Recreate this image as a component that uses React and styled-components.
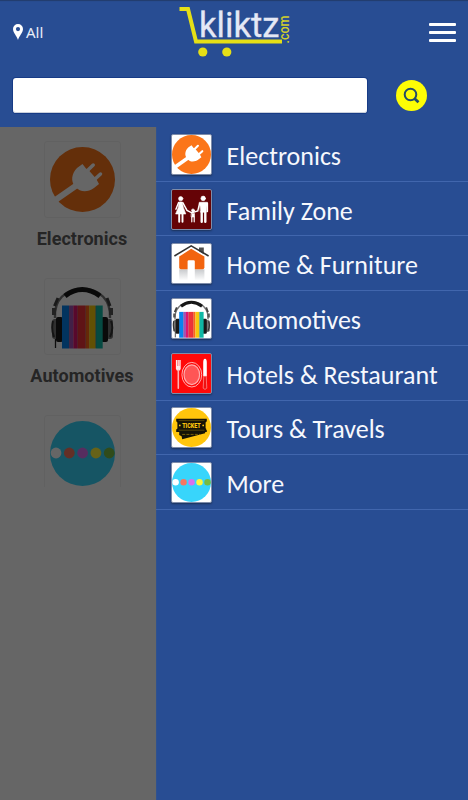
import React from "react";
import styled, { createGlobalStyle } from "styled-components";

const GlobalStyle = createGlobalStyle`
  * {
    box-sizing: border-box;
  }

  body {
    margin: 0;
    background-color: #ffffff;
    overflow: hidden;
  }
`;

const Container = styled.div`
  display: flex;
  flex-direction: column;
  width: 468px;
  height: 800px;
  overflow: hidden;
`;

const Header = styled.header`
  height: 127px;
  flex-shrink: 0;
  background-color: #284d93;
  box-shadow: inset 0 2px 1px -1px #223c6c;
`;

const TopBar = styled.div`
  display: flex;
  align-items: center;
  justify-content: space-between;
  height: 64px;
  padding: 0 12px 0 13px;
`;

const Location = styled.div`
  display: flex;
  align-items: center;
  gap: 3px;
  width: 157px;
  color: #e9eef8;
  font-family: "Noto Sans", sans-serif;
  font-size: 15px;
  line-height: 20px;
`;

const Logo = styled.svg`
  width: 130px;
  height: 64px;
  margin-right: auto;
`;

const MenuButton = styled.button`
  display: flex;
  flex-direction: column;
  justify-content: space-between;
  width: 27px;
  height: 19px;
  padding: 0;
  border: 0;
  background: none;
`;

const MenuLine = styled.span`
  width: 27px;
  height: 3px;
  border-radius: 1px;
  background-color: #ffffff;
`;

const SearchBar = styled.div`
  display: flex;
  align-items: center;
  gap: 29px;
  padding: 14px 13px 0;
`;

const SearchInput = styled.input`
  width: 354px;
  height: 35px;
  padding: 0 10px;
  border: 0;
  border-radius: 3px;
  outline: none;
  background-color: #ffffff;
  box-shadow: 0 0 0 1px #173b86, inset 0 -1px 0 #c9d0dc;
`;

const SearchButton = styled.button`
  display: flex;
  width: 31px;
  height: 31px;
  padding: 0;
  border: 0;
  border-radius: 50%;
  background-color: #fdfd05;
`;

const Body = styled.div`
  display: flex;
  flex: 1;
`;

const CategoryPane = styled.div`
  position: relative;
  width: 156px;
  padding: 14px 0 0 8px;
`;

const Scrim = styled.div`
  position: absolute;
  inset: 0;
  background-color: rgba(0, 0, 0, 0.6);
`;

const CategoryList = styled.div`
  height: 346px;
  overflow: hidden;
`;

const Category = styled.div`
  display: flex;
  flex-direction: column;
  align-items: center;
  height: 137px;
`;

const Card = styled.div`
  display: flex;
  align-items: center;
  justify-content: center;
  width: 77px;
  height: 77px;
  border: 1px solid #f2f2f2;
  border-radius: 3px;
`;

const CategoryName = styled.p`
  margin: 10px 0 0 0;
  color: #5c5c5c;
  font-family: Roboto, sans-serif;
  font-size: 18px;
  font-weight: bold;
  line-height: 22px;
  letter-spacing: 0.06px;
`;

const Drawer = styled.nav`
  flex: 1;
  background-color: #284d93;
  box-shadow: inset 1px 0 0 #30518d;
`;

const MenuItem = styled.div`
  display: flex;
  align-items: center;
  gap: 14.6px;
  height: 54.72px;
  padding: 1px 0 0 15px;
  border-bottom: 1px solid #4166ad;
`;

const Tile = styled.div`
  display: flex;
  width: 41px;
  height: 41px;
  flex-shrink: 0;
  overflow: hidden;
  border: 1px solid #7e8caa;
  border-radius: 2px;
  background-color: ${({ $bg }) => $bg || "#ffffff"};
  box-shadow: 0 1px 2px #1b3159;
`;

const MenuLabel = styled.span`
  padding-top: 3px;
  color: #f6f8fd;
  font-family: Carlito, Lato, sans-serif;
  font-size: 26px;
  line-height: 32px;
  white-space: nowrap;
`;

const Icon = ({ size, children }) => (
  <svg width={size} height={size} viewBox="0 0 65 65">
    {children}
  </svg>
);

const PlugIcon = ({ size }) => (
  <Icon size={size}>
    <circle cx="32.5" cy="32.5" r="32.5" fill="#fb7519" />
    <path d="M4 54L27 38" stroke="#fff" strokeWidth="6" />
    <path
      d="M32.5 17L36 21.5L38.5 23L46 31.5L49 37L44 41C37 46 30 45 25.5 40C20 34 22 26 27 21Z"
      fill="#fff"
    />
    <path
      d="M37 24L43.2 18M44.5 32.5L50.5 27"
      stroke="#fff"
      strokeWidth="3.5"
      strokeLinecap="round"
    />
  </Icon>
);

const FamilyIcon = ({ size }) => (
  <Icon size={size}>
    <g fill="#fff" stroke="#fff" strokeLinecap="round">
      <circle cx="14.5" cy="14.5" r="3.6" />
      <path d="M12 20H17L19 29L23 40H6L10.5 29Z" />
      <path
        d="M11 21L6.5 32M18 21L25 34L33 38L43 35L46 22M59 22V36"
        fill="none"
        strokeWidth="2.4"
      />
      <path d="M12 39V53M17.5 39V53" strokeWidth="3.2" />
      <circle cx="35" cy="34" r="2.5" />
      <path d="M32.5 39H37.5V45H32.5Z" />
      <path d="M33 45V53M37 45V53" strokeWidth="2" />
      <circle cx="52" cy="14" r="3.8" />
      <path d="M46 20.5H59L57 37H48Z" />
      <path d="M49.5 36V53M55.5 36V53" strokeWidth="4" />
    </g>
  </Icon>
);

const HomeIcon = ({ size }) => (
  <Icon size={size}>
    <defs>
      <linearGradient id="homeReflection" x2="0" y2="1">
        <stop stopColor="#c7c9cc" />
        <stop offset="1" stopColor="#fff" />
      </linearGradient>
    </defs>
    <path d="M12 42H54V61H12Z" fill="url(#homeReflection)" />
    <path d="M12 21L32 8L54 21V39Q54 42 51 42H15Q12 42 12 39Z" fill="#f2640f" />
    <path d="M26 61V29Q26 27 28 27H36Q38 27 38 29V61Z" fill="#fff" />
    <path d="M45 6H53V17L45 12Z" fill="#4e4e4e" />
    <path d="M4 20L32 3L61 20" fill="none" stroke="#333" strokeWidth="2.6" />
  </Icon>
);

const books = [
  { x: 12, width: 7.3, color: "#0783ed" },
  { x: 19.3, width: 4, color: "#a452b5" },
  { x: 23.3, width: 4.3, color: "#dd1670" },
  { x: 27.6, width: 8, color: "#ee3437" },
  { x: 35.6, width: 3.6, color: "#ff6617" },
  { x: 39.2, width: 6.5, color: "#f5c90c" },
  { x: 45.7, width: 7, color: "#10b8a5" },
];

const HeadphonesIcon = ({ size }) => (
  <Icon size={size}>
    <path d="M5 34C4 16 15 5 32.5 5S61 16 60 34" fill="none" stroke="#777" strokeWidth="2.4" />
    <path d="M15 12Q32 -1 50 12" fill="none" stroke="#171717" strokeWidth="5" />
    <path d="M4.5 22L8 14M60 22L57 14" stroke="#424242" strokeWidth="3" />
    <path d="M4 24V31M61 24V31" stroke="#555" strokeWidth="4" />
    <path d="M5.5 53V64" stroke="#222" strokeWidth="1.3" />
    <rect x="2" y="35" width="7" height="20" rx="3" fill="#777" />
    <rect x="6" y="33" width="7" height="25" rx="2" fill="#191919" />
    <rect x="56" y="35" width="7" height="20" rx="3" fill="#777" />
    <rect x="51" y="33" width="7" height="25" rx="2" fill="#191919" />
    <path d="M3 37Q1 45 4 53M61 37Q64 45 60 53" fill="none" stroke="#333" strokeWidth="2" />
    {books.map(({ x, width, color }) => (
      <rect key={x} x={x} y="21.5" width={width} height="43" fill={color} />
    ))}
    <path d="M19.3 22V64M27.6 22V64M35.6 22V64M45.7 22V64" stroke="#7b2544" strokeOpacity=".3" />
  </Icon>
);

const RestaurantIcon = ({ size }) => (
  <Icon size={size}>
    <ellipse cx="33" cy="34.5" rx="16.5" ry="20.5" fill="#ff0909" stroke="#ffc3c3" strokeWidth="1.5" />
    <ellipse cx="33" cy="34.5" rx="13" ry="16.5" fill="#ff5555" stroke="#ffabab" strokeWidth="2" />
    <path d="M6.5 10H14.5V24Q14.5 28 10.5 28Q6.5 28 6.5 24Z" fill="#ffeaea" />
    <path d="M9.2 10V20M11.8 10V20" stroke="#ff5050" strokeWidth="1" />
    <path d="M10.5 27V57" stroke="#ffb3b3" strokeWidth="2.6" strokeLinecap="round" />
    <path d="M52 37V15Q52 8 55 8Q58 8 58 15V37Z" fill="#fff" />
    <path d="M53 37H57L58 57Q55 61 52 57Z" fill="#e11" stroke="#ffb1b1" />
  </Icon>
);

const TicketIcon = ({ size }) => (
  <Icon size={size}>
    <circle cx="32.5" cy="32.5" r="32.5" fill="#ffc50c" />
    <path d="M12 38L57 34L55 42L17 52L16 47L12 45Z" fill="#151307" />
    <path d="M7 18H58V22L56 24V34L58 37V40H7V36L9 34V24L7 22Z" fill="#151307" />
    <path d="M11 21H54M11 37H54" stroke="#806606" strokeWidth="1" />
    <path d="M17 44H47" stroke="#a17f07" strokeWidth="1.2" strokeDasharray="5 2" />
    <text
      x="17"
      y="34"
      textLength="31"
      lengthAdjust="spacingAndGlyphs"
      fill="#ffc50c"
      fontFamily="Roboto, sans-serif"
      fontWeight="900"
      fontSize="13.5"
    >
      TICKET
    </text>
    <circle cx="13" cy="29" r="1.5" fill="#ffc50c" />
    <circle cx="52" cy="29" r="1.5" fill="#ffc50c" />
  </Icon>
);

const dots = ["#ffffff", "#f77660", "#d872ed", "#fff63c", "#78bb42"];

const MoreIcon = ({ size }) => (
  <Icon size={size}>
    <circle cx="32.5" cy="32.5" r="32.5" fill="#38d5fb" />
    {dots.map((color, i) => (
      <circle key={color} cx={6 + i * 13.3} cy="32" r="5.4" fill={color} />
    ))}
  </Icon>
);

const categories = [
  { name: "Electronics", Image: PlugIcon },
  { name: "Automotives", Image: HeadphonesIcon },
  { Image: MoreIcon },
];

const menuItems = [
  { name: "Electronics", Image: PlugIcon },
  { name: "Family Zone", Image: FamilyIcon, bg: "#650306" },
  { name: "Home & Furniture", Image: HomeIcon },
  { name: "Automotives", Image: HeadphonesIcon },
  { name: "Hotels & Restaurant", Image: RestaurantIcon, bg: "#ff0909" },
  { name: "Tours & Travels", Image: TicketIcon },
  { name: "More", Image: MoreIcon },
];

const App = () => {
  return (
    <Container>
      <GlobalStyle />
      <Header>
        <TopBar>
          <Location>
            <svg width="10" height="16" viewBox="0 0 10 16">
              <path
                d="M5 0A5 5 0 0 0 0 5C0 8.5 3.8 12 5 16C6.2 12 10 8.5 10 5A5 5 0 0 0 5 0ZM5 3A2.1 2.1 0 1 1 5 7.2A2.1 2.1 0 1 1 5 3Z"
                fill="#fff"
                fillRule="evenodd"
              />
            </svg>
            All
          </Location>
          <Logo viewBox="0 0 130 64">
            <path d="M9.5 9H18L26 41.5H112" fill="none" stroke="#e5df16" strokeWidth="4" />
            <circle cx="32.8" cy="52" r="4.6" fill="#e5df16" />
            <circle cx="56.8" cy="52" r="4.6" fill="#e5df16" />
            <text
              x="29"
              y="36.7"
              textLength="80.5"
              lengthAdjust="spacingAndGlyphs"
              fill="#e4e8f5"
              stroke="#e4e8f5"
              strokeWidth="0.3"
              fontFamily="Roboto, sans-serif"
              fontSize="35.5"
            >
              kliktz
            </text>
            <text
              transform="translate(118.5 43.5) rotate(-90)"
              textLength="28"
              lengthAdjust="spacingAndGlyphs"
              fill="#d1cf2b"
              fontFamily="Roboto, sans-serif"
              fontWeight="500"
              fontSize="14"
            >
              .com
            </text>
          </Logo>
          <MenuButton aria-label="Menu">
            <MenuLine />
            <MenuLine />
            <MenuLine />
          </MenuButton>
        </TopBar>
        <SearchBar>
          <SearchInput />
          <SearchButton aria-label="Search">
            <svg width="31" height="31" viewBox="0 0 31 31" fill="none" stroke="#234b68">
              <circle cx="14.5" cy="14.5" r="5.8" strokeWidth="2" />
              <path d="M18.5 18.5L22.5 22.3" strokeWidth="2.8" />
            </svg>
          </SearchButton>
        </SearchBar>
      </Header>
      <Body>
        <CategoryPane>
          <CategoryList>
            {categories.map(({ name, Image }, i) => (
              <Category key={i}>
                <Card>
                  <Image size={65} />
                </Card>
                {name && <CategoryName>{name}</CategoryName>}
              </Category>
            ))}
          </CategoryList>
          <Scrim />
        </CategoryPane>
        <Drawer>
          {menuItems.map(({ name, Image, bg }) => (
            <MenuItem key={name}>
              <Tile $bg={bg}>
                <Image size={39} />
              </Tile>
              <MenuLabel>{name}</MenuLabel>
            </MenuItem>
          ))}
        </Drawer>
      </Body>
    </Container>
  );
};

export default App;
